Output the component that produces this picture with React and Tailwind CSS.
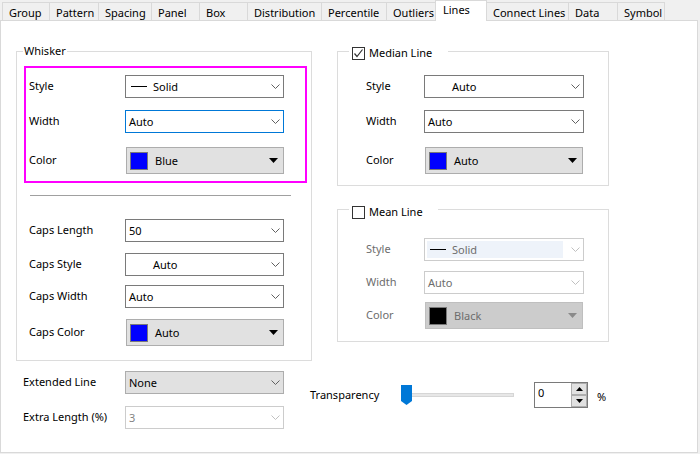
import React from "react";

const tabs = [
  { label: "Group", w: 47 },
  { label: "Pattern", w: 49 },
  { label: "Spacing", w: 53 },
  { label: "Panel", w: 48 },
  { label: "Box", w: 48 },
  { label: "Distribution", w: 74 },
  { label: "Percentile", w: 65 },
  { label: "Outliers", w: 49 },
  { label: "Lines", w: 52, active: true },
  { label: "Connect Lines", w: 81 },
  { label: "Data", w: 49 },
  { label: "Symbol", w: 48, last: true },
];

const Chevron = ({ color = "#606060" }) => (
  <svg width="9" height="5" viewBox="0 0 9 5" className="shrink-0">
    <polyline points="0.5,0.5 4.5,4.5 8.5,0.5" fill="none" stroke={color} strokeWidth="1" />
  </svg>
);

const Triangle = ({ color = "#000" }) => (
  <svg width="9" height="5" viewBox="0 0 9 5" className="shrink-0">
    <polygon points="0,0 9,0 4.5,5" fill={color} />
  </svg>
);

// combo box: variant normal | focus | filled | disabled
const Combo = ({ w = 159, text, line, indent, variant = "normal", highlight, textColor }) => {
  const box = {
    normal: "border-[#7a7a7a] bg-white text-black",
    focus: "border-[#0078d7] bg-white text-black",
    filled: "border-[#adadad] bg-[#e1e1e1] text-black",
    disabled: "border-[#cccccc] bg-white text-[#6d6d6d]",
  }[variant];
  return (
    <div
      className={`h-[23px] flex items-center border shrink-0 ${box}`}
      style={{ width: w }}
    >
      <div
        className={`flex items-center h-[17px] ml-[2px] ${
          highlight ? "bg-[#eef3fa] w-[136px]" : ""
        }`}
      >
        {line && <div className="w-[16px] h-px bg-black ml-[3px] mr-[6px]" />}
        {indent && <div className="w-[25px]" />}
        <span className={line || indent ? "" : "pl-px"} style={textColor ? { color: textColor } : undefined}>
          {text}
        </span>
      </div>
      <div className="ml-auto mr-[3px] flex">
        <Chevron color={variant === "disabled" ? "#c0c0c0" : "#606060"} />
      </div>
    </div>
  );
};

const ColorCombo = ({ color, text, disabled }) => (
  <div
    className={`w-[158px] h-[27px] ml-px flex items-center border ${
      disabled
        ? "bg-[#cccccc] border-[#bfbfbf] text-[#6d6d6d]"
        : "bg-[#e1e1e1] border-[#adadad] text-black"
    }`}
  >
    <div
      className="w-[18px] h-[18px] ml-[3px] border border-[#7a7a7a]"
      style={{ backgroundColor: color }}
    />
    <span className="ml-[7px]">{text}</span>
    <div className="ml-auto mr-[5px] flex">
      <Triangle color={disabled ? "#8a8a8a" : "#000"} />
    </div>
  </div>
);

const Row = ({ label, labelW = 96, mt = 0, pl = 0, disabled, children }) => (
  <div className="flex items-center" style={{ marginTop: mt, paddingLeft: pl }}>
    <span
      className={`shrink-0 -mt-[2px] ${disabled ? "text-[#6d6d6d]" : "text-black"}`}
      style={{ width: labelW }}
    >
      {label}
    </span>
    {children}
  </div>
);

const CheckBox = ({ checked }) => (
  <div className="w-[13px] h-[13px] border border-[#333333] bg-white flex items-center justify-center shrink-0">
    {checked && (
      <svg width="11" height="11" viewBox="0 0 11 11">
        <polyline points="1.5,5.5 4,8.5 9.5,1.5" fill="none" stroke="#333" strokeWidth="1.2" />
      </svg>
    )}
  </div>
);

const SpinArrow = ({ up }) => (
  <svg width="7" height="4" viewBox="0 0 7 4">
    <polygon points={up ? "0,4 7,4 3.5,0" : "0,0 7,0 3.5,4"} fill="#000" />
  </svg>
);

export default function App() {
  return (
    <div className="w-[700px] h-[454px] bg-[#f0f0f0] overflow-hidden font-['Segoe_UI','Noto_Sans',sans-serif] text-[11px] leading-[16px] text-black">
      {/* Tabs */}
      <div className="h-[20px] flex items-end pl-[2px]">
        {tabs.map((t) =>
          t.active ? (
            <div
              key={t.label}
              className="relative z-10 h-[21px] -mb-px bg-white border-l border-t border-r border-[#d9d9d9] pl-[7px] pt-[1px] shrink-0 whitespace-nowrap"
              style={{ width: t.w }}
            >
              {t.label}
            </div>
          ) : (
            <div
              key={t.label}
              className={`h-[18px] bg-[#f0f0f0] border-t border-[#d9d9d9] pl-[6px] pt-[2px] shrink-0 whitespace-nowrap overflow-hidden ${
                t.label === "Connect Lines" ? "" : "border-l"
              } ${t.last ? "border-r" : ""}`}
              style={{ width: t.w }}
            >
              {t.label}
            </div>
          )
        )}
      </div>

      {/* Page */}
      <div className="w-[698px] h-[433px] border border-[#d9d9d9] bg-white">
        <div className="flex pt-[30px] pl-[15px]">
          {/* Whisker group */}
          <div className="relative w-[296px] h-[310px] border border-[#dcdcdc] shrink-0">
            <span className="absolute -top-[9px] left-[6px] px-[1px] bg-white">Whisker</span>
            <div className="ml-[7px] mt-[14px] w-[283px] border-2 border-[#ff00ff] pt-[7px] pb-[7px] pl-[3px]">
              <Row label="Style">
                <Combo text="Solid" line />
              </Row>
              <Row label="Width" mt={12}>
                <Combo text="Auto" variant="focus" />
              </Row>
              <Row label="Color" mt={14}>
                <ColorCombo color="#0000ff" text="Blue" />
              </Row>
            </div>
            <div className="ml-[13px] mt-[12px] w-[261px] h-px bg-[#a0a0a0]" />
            <div className="pl-[12px]">
              <Row label="Caps Length" mt={23}>
                <Combo text="50" />
              </Row>
              <Row label="Caps Style" mt={11}>
                <Combo text="Auto" indent />
              </Row>
              <Row label="Caps Width" mt={9}>
                <Combo text="Auto" />
              </Row>
              <Row label="Caps Color" mt={11}>
                <ColorCombo color="#0000ff" text="Auto" />
              </Row>
            </div>
          </div>

          {/* Right column */}
          <div className="ml-[25px] flex flex-col">
            <div className="relative w-[272px] border border-[#dcdcdc] pl-[28px] pt-[23px] pb-[11px]">
              <div className="absolute -top-[7px] left-[11px] w-[99px] bg-white flex items-center pl-[3px] gap-[4px]">
                <CheckBox checked />
                <span>Median Line</span>
              </div>
              <Row label="Style" labelW={58}>
                <Combo w={160} text="Auto" indent />
              </Row>
              <Row label="Width" labelW={58} mt={12}>
                <Combo w={160} text="Auto" />
              </Row>
              <Row label="Color" labelW={58} mt={14}>
                <ColorCombo color="#0000ff" text="Auto" />
              </Row>
            </div>

            <div className="relative mt-[23px] w-[272px] border border-[#dcdcdc] pl-[28px] pt-[28px] pb-[12px]">
              <div className="absolute -top-[6px] left-[11px] w-[89px] bg-white flex items-center pl-[3px] gap-[4px]">
                <CheckBox />
                <span>Mean Line</span>
              </div>
              <Row label="Style" labelW={58} disabled>
                <Combo w={160} text="Solid" line variant="disabled" highlight />
              </Row>
              <Row label="Width" labelW={58} mt={10} disabled>
                <Combo w={160} text="Auto" variant="disabled" />
              </Row>
              <Row label="Color" labelW={58} mt={8} disabled>
                <ColorCombo color="#000000" text="Black" disabled />
              </Row>
            </div>
          </div>
        </div>

        {/* Bottom section */}
        <div className="flex">
          <div className="w-[287px] pl-[22px] shrink-0">
            <Row label="Extended Line" labelW={102} mt={10}>
              <Combo text="None" variant="filled" />
            </Row>
            <Row label="Extra Length (%)" labelW={102} mt={12}>
              <Combo text="3" variant="disabled" textColor="#838383" />
            </Row>
          </div>

          <div className="ml-[22px] mt-[21px] flex items-center h-[26px]">
            <span className="w-[91px] shrink-0">Transparency</span>
            {/* slider */}
            <div className="relative w-[113px] h-[20px] flex items-center">
              <div className="w-full h-[4px] bg-[#e7e7e7] border border-[#d6d6d6]" />
              <svg
                width="11"
                height="20"
                viewBox="0 0 11 20"
                className="absolute left-0 top-0"
              >
                <polygon points="0,0 11,0 11,16 5.5,20 0,16" fill="#0078d7" />
              </svg>
            </div>
            {/* spin box */}
            <div className="ml-[20px] w-[54px] h-[26px] border border-[#7a7a7a] flex">
              <span className="pl-[3px] pt-[2px] flex-1">0</span>
              <div className="w-[16px] flex flex-col">
                <div className="h-[12px] bg-[#e1e1e1] border border-[#adadad] flex items-center justify-center">
                  <SpinArrow up />
                </div>
                <div className="h-[12px] bg-[#e1e1e1] border border-[#adadad] flex items-center justify-center">
                  <SpinArrow />
                </div>
              </div>
            </div>
            <span className="ml-[9px] mt-[3px]">%</span>
          </div>
        </div>
      </div>
    </div>
  );
}
